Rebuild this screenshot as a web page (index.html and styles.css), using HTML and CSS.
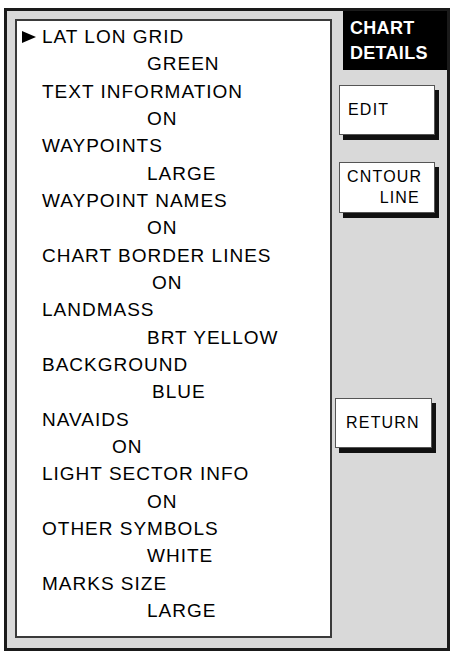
FILE: index.html
```html
<!DOCTYPE html>
<html lang="en">
<head>
  <meta charset="UTF-8">
  <title>CHART DETAILS</title>
  <meta name="viewport" content="width=device-width, initial-scale=1.0">
  <link rel="stylesheet" href="styles.css">
</head>
<body>
  <div class="frame">
    <ul class="menu">
      <li class="item selected">
        <span class="label"><span class="cursor"></span>LAT LON GRID</span>
        <span class="value">GREEN</span>
      </li>
      <li class="item">
        <span class="label">TEXT INFORMATION</span>
        <span class="value">ON</span>
      </li>
      <li class="item">
        <span class="label">WAYPOINTS</span>
        <span class="value">LARGE</span>
      </li>
      <li class="item">
        <span class="label">WAYPOINT NAMES</span>
        <span class="value">ON</span>
      </li>
      <li class="item">
        <span class="label">CHART BORDER LINES</span>
        <span class="value shift-right">ON</span>
      </li>
      <li class="item">
        <span class="label">LANDMASS</span>
        <span class="value">BRT YELLOW</span>
      </li>
      <li class="item">
        <span class="label">BACKGROUND</span>
        <span class="value shift-right">BLUE</span>
      </li>
      <li class="item">
        <span class="label">NAVAIDS</span>
        <span class="value shift-left">ON</span>
      </li>
      <li class="item">
        <span class="label">LIGHT SECTOR INFO</span>
        <span class="value">ON</span>
      </li>
      <li class="item">
        <span class="label">OTHER SYMBOLS</span>
        <span class="value">WHITE</span>
      </li>
      <li class="item">
        <span class="label">MARKS SIZE</span>
        <span class="value">LARGE</span>
      </li>
    </ul>

    <div class="side">
      <div class="title">CHART<br>DETAILS</div>
      <div class="key key-edit">EDIT</div>
      <div class="key key-contour">
        <span class="line-l">CNTOUR</span>
        <span class="line-r">LINE</span>
      </div>
      <div class="key key-return">RETURN</div>
    </div>
  </div>
</body>
</html>
```

FILE: styles.css
```css
body {
  margin: 0;
  background: #fff;
  color: #000;
  font-family: "Liberation Sans", Arial, sans-serif;
}

.frame {
  display: flex;
  align-items: flex-start;
  margin: 8px 0 0 4px;
  width: 440px;
  height: 637px;
  border: 3px solid #1a1a1a;
  background: #d9d9d9;
}

/* list of settings */
.menu {
  list-style: none;
  margin: 8px 0 0 8px;
  padding: 2px 0 0 0;
  box-sizing: border-box;
  width: 317px;
  height: 619px;
  border: 2px solid #3a3a3a;
  background: #fff;
  font-size: 19px;
  letter-spacing: 1px;
  line-height: 27.33px;
}
.item .label,
.item .value {
  display: flex;
  align-items: center;
  height: 27.33px;
}
.item .label { padding-left: 25px; }
.item .value { padding-left: 130px; }
.item .value.shift-right { padding-left: 135px; }
.item .value.shift-left { padding-left: 95px; }

.cursor {
  width: 0;
  height: 0;
  margin-left: -20px;
  margin-right: 6px;
  border-left: 14px solid #000;
  border-top: 6.5px solid transparent;
  border-bottom: 6.5px solid transparent;
}

/* soft keys */
.side {
  flex: 1;
  display: flex;
  flex-direction: column;
}
.title {
  margin-left: 11px;
  height: 59px;
  padding: 5px 0 0 7px;
  box-sizing: border-box;
  background: #000;
  color: #fff;
  font-weight: bold;
  font-size: 18px;
  letter-spacing: 0.3px;
  line-height: 25px;
}
.key {
  width: 96px;
  height: 50px;
  margin-left: 7px;
  box-sizing: border-box;
  border: 1px solid #555;
  background: #fff;
  box-shadow: 4px 5px 0 #111;
  font-size: 16px;
  letter-spacing: 1.2px;
  display: flex;
  align-items: center;
  padding-left: 8px;
}
.key-edit { margin-top: 15px; }
.key-contour {
  margin-top: 27px;
  height: 51px;
  flex-direction: column;
  align-items: stretch;
  justify-content: center;
  line-height: 20.5px;
  padding: 0 14px 0 7px;
}
.key-contour .line-r { text-align: right; }
.key-return {
  margin-top: 185px;
  margin-left: 3px;
  width: 97px;
  padding-left: 10px;
}
```
